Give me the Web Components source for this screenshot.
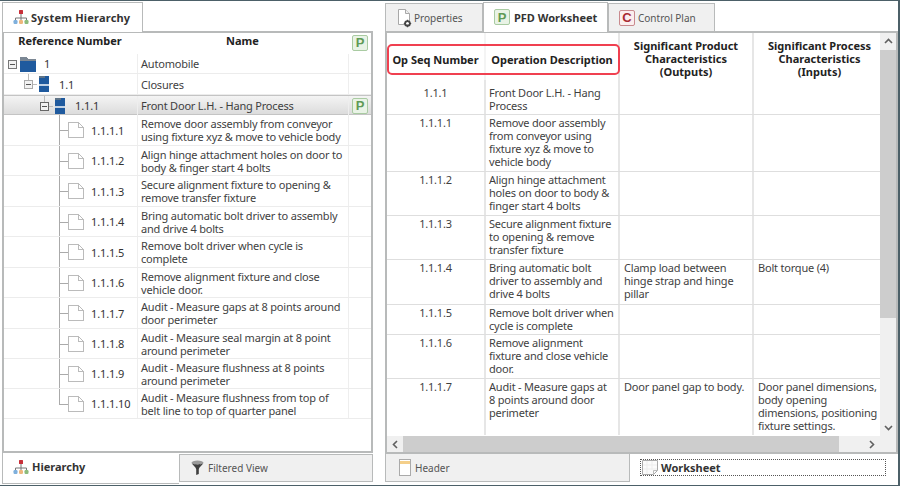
<!doctype html>
<html>
<head>
<meta charset="utf-8">
<title>PFD Worksheet</title>
<style>
  html, body { margin: 0; height: 100%; background: #fff; }
  body { font: 11px "Noto Sans", "DejaVu Sans", sans-serif; color: #3f3f3f; overflow: hidden; }
</style>
</head>
<body>
<app-shell></app-shell>

<script>
// Icones desenhados a mao, um por chave
const ICONES = {
  org: `<svg width="16" height="16" viewBox="0 0 16 16">
    <path d="M8 5v4M2.5 12V9h11v3M8 9v3" fill="none" stroke="#777" stroke-width="1"/>
    <rect x="6" y="1" width="4" height="4" rx=".5" fill="#c8303a"/>
    <rect x="0.5" y="11" width="4" height="4" rx="1.2" fill="#7fb0dc"/>
    <rect x="6" y="11" width="4" height="4" rx="1.2" fill="#eeb67c"/>
    <rect x="11.5" y="11" width="4" height="4" rx="1.2" fill="#8cbb7c"/></svg>`,
  docGear: `<svg width="16" height="20" viewBox="0 0 16 20">
    <path d="M1.5 1.5h7l4 4v11h-11z" fill="#fff" stroke="#a8a8a8"/>
    <path d="M8.5 1.5v4h4" fill="#eee" stroke="#a8a8a8"/>
    <circle cx="10.5" cy="15.5" r="2.4" fill="none" stroke="#444" stroke-width="1.8"/>
    <path d="M10.5 11.8v1.4M10.5 17.8v1.4M6.8 15.5h1.4M12.8 15.5h1.4" stroke="#444" stroke-width="1.2"/></svg>`,
  funil: `<svg width="13" height="16" viewBox="0 0 13 16">
    <ellipse cx="6.5" cy="2.6" rx="6" ry="2" fill="#9a9a9a"/>
    <path d="M.6 3.2c2 2.4 4.2 4 4.6 6V15l2.6-1V9.2c.4-2 2.6-3.6 4.6-6-3 1.6-8.8 1.6-11.8 0z" fill="#3f3f3f"/></svg>`,
  pagina: `<svg width="12" height="17" viewBox="0 0 12 17">
    <rect x=".5" y=".5" width="11" height="16" fill="#fff" stroke="#aaa"/>
    <rect x="1" y="2" width="10" height="3" fill="#f4cf8a"/></svg>`,
  planilha: `<svg width="16" height="15" viewBox="0 0 16 15">
    <path d="M.5.5h15v10l-4 4H.5z" fill="#fbfbfb" stroke="#aaa"/>
    <path d="M11.5 14.5v-4h4" fill="none" stroke="#bbb"/>
    <path d="M5 1v13M10 1v9M1 5h14M1 9h14" stroke="#ededed"/></svg>`,
};

function crachaLetra(letra, cor, fundo, borda, tam = 16) {
  return `<span style="display:inline-flex;align-items:center;justify-content:center;box-sizing:border-box;flex:none;
    width:${tam}px;height:${tam}px;border:1px solid ${borda};border-radius:2px;background:${fundo};color:${cor};
    font:bold ${tam - 3}px 'Liberation Sans',sans-serif;line-height:1">${letra}</span>`;
}
const BADGE_P = crachaLetra("P", "#5f9a55", "#e9f3e6", "#a9cba2");
const BADGE_C = crachaLetra("C", "#a82a33", "#fbeeee", "#c98a8e");

// Aba unica; o atributo "ativa" tira o fundo cinza
class AbaItem extends HTMLElement {
  constructor() {
    super();
    this.attachShadow({ mode: "open" }).innerHTML = `
      <style>
        :host { display: flex; align-items: center; gap: 4px; box-sizing: border-box; padding: 0 10px;
          background: #f0f0f0; border: 1px solid #b8baba; color: #555; white-space: nowrap; font-size: 10px; }
        :host([ativa]) { background: #fff; color: #333; font-weight: 700; font-size: 11px; }
      </style><slot></slot>`;
  }
}
customElements.define("aba-item", AbaItem);

// Linha da arvore: o conector fica em SVG atras do numero
class TreeRow extends HTMLElement {
  connectedCallback() {
    const nivel = +this.getAttribute("nivel");
    const h = +this.getAttribute("altura");
    const selecionada = this.hasAttribute("selecionada");
    const ultima = this.hasAttribute("ultima");
    const meio = Math.floor(h / 2);
    const xs = [4, 20, 36];
    let desenho = "";
    if (nivel < 3) {
      const x = xs[nivel];
      if (nivel > 0) desenho += `<path d="M${x + 4.5} 0V${meio - 4}" stroke="#bbb"/>`;
      desenho += `<rect x="${x + 0.5}" y="${meio - 3.5}" width="8" height="8" fill="#f2f2f2" stroke="${nivel === 2 ? "#666" : nivel === 0 ? "#777" : "#aaa"}"/>
        <path d="M${x + 2} ${meio + 0.5}h5" stroke="#555"/>`;
      if (nivel > 0) desenho += `<path d="M${x + 9} ${meio + 0.5}h4" stroke="#bbb"/>`;
      if (nivel === 0) {
        desenho += `<path d="M16 ${meio - 7}h6l2 2h8v3H16z" fill="#7b8794"/><rect x="16" y="${meio - 3}" width="16" height="11" fill="#1f5a9e"/>`;
      } else {
        const ix = x + 15;
        desenho += `<rect x="${ix}" y="${meio - 8}" width="10" height="16" fill="#1f5a9e"/>
          <rect x="${ix}" y="${meio - 8}" width="6" height="2" fill="#5f7488"/>
          <rect x="${ix}" y="${meio}" width="10" height="2" fill="#c2d2e4"/>`;
      }
    } else {
      const topo = meio - 8;
      desenho += `<path d="M55.5 0V${ultima ? meio + 0.5 : h}M55.5 ${meio + 0.5}H64" fill="none" stroke="#aaa"/>
        <path d="M64.5 ${topo + 0.5}h10l5 5v10h-15z" fill="#fff" stroke="#bbb"/>
        <path d="M74.5 ${topo + 0.5}v5h5" fill="none" stroke="#bbb"/>`;
    }
    const recuo = [40, 55, 71, 87][nivel];
    const fundo = selecionada ? "linear-gradient(#f4f4f4,#dcdcdc)" : "transparent";
    const root = this.attachShadow({ mode: "open" });
    root.innerHTML = `
      <style>
        :host { display: grid; grid-template-columns: 134px 211px 22px; height: ${h}px; box-sizing: border-box;
          border-bottom: 1px solid #ececec; background: ${fundo}; }
        :host([selecionada]) { border-top: 1px solid #c4c4c4; border-bottom: 1px solid #c4c4c4; }
        .ref { display: grid; align-items: center; border-right: 1px solid #eee; }
        .ref > * { grid-area: 1 / 1; }
        .num { padding-left: ${recuo}px; color: #333; letter-spacing: -.1px; }
        .nome { display: flex; align-items: center; padding: 0 0 0 3px; line-height: 13px; border-right: 1px solid #eee; letter-spacing: -.2px; white-space: nowrap; }
        .p { display: flex; align-items: center; justify-content: center; }
      </style>
      <div class="ref"><svg width="134" height="${h - 1}" shape-rendering="crispEdges">${desenho}</svg><span class="num">${this.getAttribute("num")}</span></div>
      <div class="nome"><span><slot></slot></span></div>
      <div class="p">${selecionada ? BADGE_P : ""}</div>`;
  }
}
customElements.define("tree-row", TreeRow);

const LINHAS_ARVORE = [
  [0, "1", "Automobile", 20],
  [1, "1.1", "Closures", 21],
  [2, "1.1.1", "Front Door L.H. - Hang Process", 20],
  [3, "1.1.1.1", "Remove door assembly from conveyor<br>using fixture xyz &amp; move to vehicle body", 31],
  [3, "1.1.1.2", "Align hinge attachment holes on door to<br>body &amp; finger start 4 bolts", 30],
  [3, "1.1.1.3", "Secure alignment fixture to opening &amp;<br>remove transfer fixture", 31],
  [3, "1.1.1.4", "Bring automatic bolt driver to assembly<br>and drive 4 bolts", 30],
  [3, "1.1.1.5", "Remove bolt driver when cycle is<br>complete", 31],
  [3, "1.1.1.6", "Remove alignment fixture and close<br>vehicle door.", 30],
  [3, "1.1.1.7", "Audit - Measure gaps at 8 points around<br>door perimeter", 31],
  [3, "1.1.1.8", "Audit - Measure seal margin at 8 point<br>around perimeter", 30],
  [3, "1.1.1.9", "Audit - Measure flushness at 8 points<br>around perimeter", 30],
  [3, "1.1.1.10", "Audit - Measure flushness from top of<br>belt line to top of quarter panel", 30],
];

class HierarchyPane extends HTMLElement {
  constructor() {
    super();
    const linhas = LINHAS_ARVORE.map(([n, num, nome, h], i) =>
      `<tree-row nivel="${n}" num="${num}" altura="${h}" ${i === 2 ? "selecionada" : ""} ${i === LINHAS_ARVORE.length - 1 ? "ultima" : ""}>${nome}</tree-row>`).join("");
    this.attachShadow({ mode: "open" }).innerHTML = `
      <style>
        :host { display: flex; flex-direction: column; width: 371px; }
        .topo { display: flex; height: 30px; }
        .topo aba-item { width: 141px; border-bottom: 0; gap: 2px; padding: 0 0 1px 10px; letter-spacing: .2px; position: relative; z-index: 1; }
        .corpo { flex: 1; border: 2px solid #b8baba; background: #fff; margin-top: -1px; overflow: hidden; }
        .cab { display: grid; grid-template-columns: 134px 211px 22px; height: 21px; font-weight: 700; color: #222; }
        .cab div { display: flex; justify-content: center; align-items: center; padding: 0 2px 7px 0; }
        .cab div:last-child { padding: 0 0 3px 0; }
        .baixo { display: flex; height: 31px; }
        .baixo aba-item { border-top: 0; }
        .baixo .a { width: 177px; padding: 0 0 3px 10px; gap: 3px; border-right: 0; }
        .baixo .b { width: 194px; padding: 0 0 1px 11px; margin: 1px 0 2px 0; border-top: 1px solid #b8baba; gap: 4px; }
      </style>
      <div class="topo"><aba-item ativa>${ICONES.org}System Hierarchy</aba-item></div>
      <div class="corpo">
        <div class="cab"><div>Reference Number</div><div>Name</div><div>${BADGE_P}</div></div>
        ${linhas}
      </div>
      <div class="baixo">
        <aba-item class="a" ativa>${ICONES.org}Hierarchy</aba-item>
        <aba-item class="b">${ICONES.funil}Filtered View</aba-item>
      </div>`;
  }
}
customElements.define("hierarchy-pane", HierarchyPane);

const LINHAS_PLANILHA = [
  ["1.1.1", "Front Door L.H. - Hang<br>Process", "", "", 34],
  ["1.1.1.1", "Remove door assembly<br>from conveyor using<br>fixture xyz &amp; move to<br>vehicle body", "", "", 57],
  ["1.1.1.2", "Align hinge attachment<br>holes on door to body &amp;<br>finger start 4 bolts", "", "", 44],
  ["1.1.1.3", "Secure alignment fixture<br>to opening &amp; remove<br>transfer fixture", "", "", 44],
  ["1.1.1.4", "Bring automatic bolt<br>driver to assembly and<br>drive 4 bolts", "Clamp load between<br>hinge strap and hinge<br>pillar", "Bolt torque (4)", 45],
  ["1.1.1.5", "Remove bolt driver when<br>cycle is complete", "", "", 30],
  ["1.1.1.6", "Remove alignment<br>fixture and close vehicle<br>door.", "", "", 44],
  ["1.1.1.7", "Audit - Measure gaps at<br>8 points around door<br>perimeter", "Door panel gap to body.", "Door panel dimensions,<br>body opening<br>dimensions, positioning<br>fixture settings.", 57],
];

class WorksheetGrid extends HTMLElement {
  constructor() {
    super();
    const colunas = "99px 134px 134px 126px";
    const linhas = LINHAS_PLANILHA.map(([n, d, p, q, h]) => `
      <div class="lin" style="height:${h}px"><div class="n">${n}</div><div>${d}</div><div>${p}</div><div>${q}</div></div>`).join("");
    this.attachShadow({ mode: "open" }).innerHTML = `
      <style>
        :host { display: grid; grid-template-columns: 493px 16px; grid-template-rows: 403px 16px; position: relative; background: #fff; }
        .area { overflow: hidden; }
        .cab, .lin { display: grid; grid-template-columns: ${colunas}; box-sizing: border-box; }
        .cab { height: 47px; font-weight: 700; color: #222; line-height: 13px; text-align: center; }
        .cab div { display: flex; align-items: center; justify-content: center; box-sizing: border-box; border-right: 2px solid #e6e6e6; padding-top: 3px; white-space: nowrap; }
        .cab div:nth-child(1) { border-right-color: #f4f4f4; }
        .cab div:nth-child(2) { padding-top: 5px; }
        .cab div:nth-child(1) { padding-top: 5px; }
        .cab div:nth-child(4) { border-right: 0; padding-left: 5px; }
        .lin { border-top: 1px solid #dedede; line-height: 13px; letter-spacing: -.2px; white-space: nowrap; }
        .lin div { box-sizing: border-box; padding: 1px 0 0 4px; border-right: 2px solid #e6e6e6; overflow: hidden; }
        .lin div:nth-child(2) { padding-left: 3px; }
        .lin div:last-child { border-right: 0; }
        .lin .n { text-align: center; padding: 1px 0 0 0; }
        .primeira { border-top: 0; }
        .primeira div, .primeira .n { padding-top: 6px; }
        .destaque { position: absolute; left: 0; top: 11px; width: 233px; height: 31px; border: 2px solid #f04050; border-radius: 5px; box-sizing: border-box; }
        .vbar { background: #f0f0f0; display: grid; grid-template-rows: 16px 1fr 16px; }
        .hbar { background: #f0f0f0; display: grid; grid-template-columns: 16px 1fr 16px; }
        .canto { background: #f0f0f0; }
        .vbar i { background: #cdcdcd; margin: 1px 0 102px; }
        .hbar i { background: #cdcdcd; margin-right: 25px; }
        .seta { display: flex; align-items: center; justify-content: center; }
      </style>
      <div class="area">
        <div class="cab">
          <div>Op Seq Number</div><div>Operation Description</div>
          <div>Significant Product<br>Characteristics<br>(Outputs)</div><div>Significant Process<br>Characteristics<br>(Inputs)</div>
        </div>
        ${linhas}
      </div>
      <div class="vbar">
        <div class="seta"><svg width="9" height="6"><path d="M1 5l3.5-3.5L8 5" fill="none" stroke="#606060" stroke-width="1.6"/></svg></div>
        <i></i>
        <div class="seta"><svg width="9" height="6"><path d="M1 1l3.5 3.5L8 1" fill="none" stroke="#606060" stroke-width="1.6"/></svg></div>
      </div>
      <div class="hbar">
        <div class="seta"><svg width="6" height="9"><path d="M5 1L1.5 4.5 5 8" fill="none" stroke="#606060" stroke-width="1.6"/></svg></div>
        <i></i>
        <div class="seta"><svg width="6" height="9"><path d="M1 1l3.5 3.5L1 8" fill="none" stroke="#606060" stroke-width="1.6"/></svg></div>
      </div>
      <div class="canto"></div>
      <div class="destaque"></div>`;
    this.shadowRoot.querySelector(".lin").classList.add("primeira");
  }
}
customElements.define("worksheet-grid", WorksheetGrid);

class WorksheetPane extends HTMLElement {
  constructor() {
    super();
    this.attachShadow({ mode: "open" }).innerHTML = `
      <style>
        :host { display: flex; flex-direction: column; width: 513px; }
        .topo { display: flex; height: 30px; align-items: flex-end; }
        .topo aba-item { height: 29px; border-bottom: 0; padding-bottom: 1px; }
        .topo aba-item[ativa] { height: 30px; position: relative; z-index: 1; }
        .corpo { border: 2px solid #b8baba; margin-top: -1px; }
        .baixo { display: flex; flex: 1; }
        .baixo aba-item { border-top: 0; }
        .baixo .h { width: 245px; margin-bottom: 2px; padding-left: 13px; gap: 4px; }
        .baixo .w { flex: 1; border: 0; background: #fff; padding: 5px 12px 0 10px; align-items: flex-start; }
        .foco { flex: 1; display: flex; align-items: center; gap: 3px; height: 17px; box-sizing: border-box; border: 1px dotted #555; font-weight: 700; color: #333; padding: 0 0 1px 1px; }
      </style>
      <div class="topo">
        <aba-item style="width:98px;padding-left:11px;gap:1px">${ICONES.docGear}Properties</aba-item>
        <aba-item ativa style="width:125px;padding-left:10px">${BADGE_P}PFD Worksheet</aba-item>
        <aba-item style="width:107px;padding-left:10px;gap:3px">${BADGE_C}Control Plan</aba-item>
      </div>
      <div class="corpo"><worksheet-grid></worksheet-grid></div>
      <div class="baixo">
        <aba-item class="h">${ICONES.pagina}Header</aba-item>
        <aba-item class="w" ativa><div class="foco">${ICONES.planilha}Worksheet</div></aba-item>
      </div>`;
  }
}
customElements.define("worksheet-pane", WorksheetPane);

class AppShell extends HTMLElement {
  constructor() {
    super();
    this.attachShadow({ mode: "open" }).innerHTML = `
      <style>
        :host { display: flex; justify-content: flex-start; gap: 12px; box-sizing: border-box; width: 900px; height: 486px;
          padding: 1px 0 1px 2px; border-top: 1px solid #4c6068; border-bottom: 1px solid #4c6068; border-right: 2px solid #4c6068; background: #fff; }
      </style>
      <hierarchy-pane></hierarchy-pane>
      <worksheet-pane></worksheet-pane>`;
  }
}
customElements.define("app-shell", AppShell);
</script>
</body>
</html>
